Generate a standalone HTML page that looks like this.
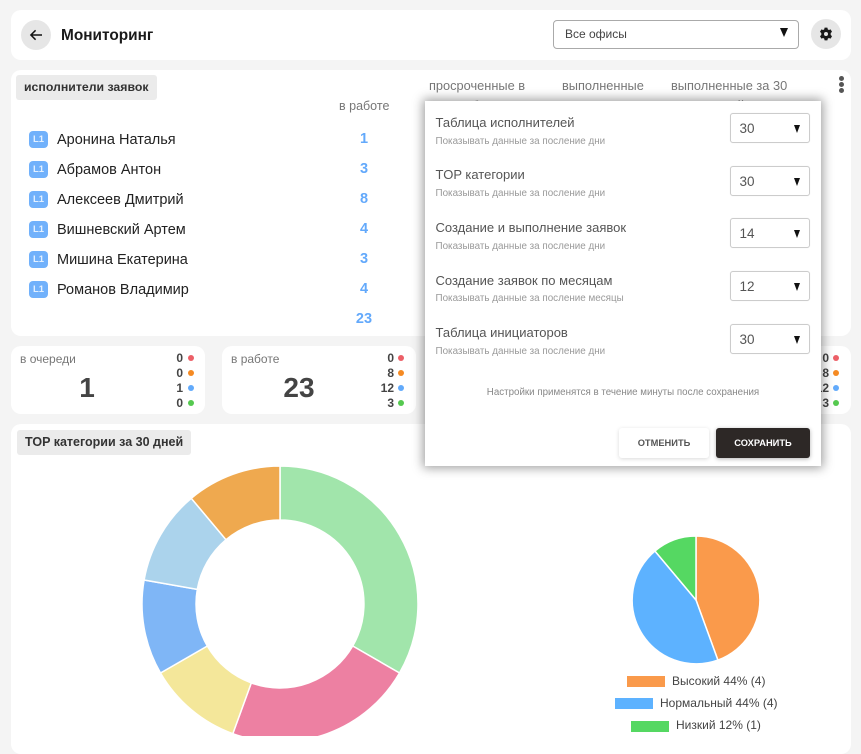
<!DOCTYPE html>
<html lang="ru"><head><meta charset="utf-8"><title>Мониторинг</title>
<style>
html,body{margin:0;padding:0}
body{width:861px;height:736px;position:relative;overflow:hidden;background:#f4f4f4;font-family:"Liberation Sans",sans-serif;color:#222}
.c{position:absolute;background:#fff;border-radius:10px}
.t{position:absolute;white-space:nowrap;line-height:20px;height:20px}
.lab{position:absolute;background:#ebebeb;border-radius:3px;font-weight:bold;font-size:12.3px;line-height:25px;height:25px;color:#333;box-sizing:border-box}
.h{font-size:12.5px;color:#777}
.hh{font-size:12.8px;color:#777}
.b{position:absolute;left:29px;width:19px;height:17px;background:#71b1fb;border-radius:4px;color:#e3f0ff;font-size:9.5px;font-weight:bold;line-height:17px;text-align:center}
.n{left:57px;font-size:14.5px;color:#222}
.v{left:334px;width:60px;text-align:center;font-size:14.5px;font-weight:bold;color:#63a9fb}
.s{font-size:12px;font-weight:bold;color:#444;text-align:right;width:24px}
.d{position:absolute;width:6px;height:6px;border-radius:50%}
.k{position:absolute;left:839px;width:5px;height:5px;border-radius:50%;background:#555}
.r{background:#ec5f67}.o{background:#f58a22}.u{background:#62aafb}.g{background:#55c94f}
.bg{font-size:28px;font-weight:bold;color:#444;text-align:center;line-height:30px;height:30px}
.m{position:absolute;left:425px;top:101px;width:396px;height:365px;background:#fff;box-shadow:0 0 10px 2px rgba(0,0,0,.38)}
.mt{left:10.5px;font-size:13px;color:#555}
.ms{left:10.5px;font-size:9.85px;color:#999}
.sel{position:absolute;left:305px;width:80px;height:30px;box-sizing:border-box;border:1px solid #ccc;border-radius:3px;background:#fff;box-shadow:0 0 1px rgba(0,0,0,.1);font-size:13.5px;line-height:29px;color:#555;padding-left:8.5px}
.sel i{position:absolute;left:63px;top:11px;width:0;height:0;border-left:3.5px solid transparent;border-right:3.5px solid transparent;border-top:8px solid #111}
.btn{position:absolute;top:327px;height:30px;line-height:31px;text-align:center;font-size:9.3px;font-weight:bold;border-radius:3px}
.lg{position:absolute;height:12px;width:38px}
.lt{font-size:12px;color:#444}
</style></head><body>

<div class="c" style="left:11px;top:10px;width:840px;height:50px"></div>
<div style="position:absolute;left:21px;top:20px;width:30px;height:30px;border-radius:50%;background:#e6e6e6"></div>
<svg style="position:absolute;left:28px;top:27px" width="16" height="16" viewBox="0 0 16 16"><path d="M14 8H3.2M7.6 3.3L2.9 8l4.7 4.7" fill="none" stroke="#111" stroke-width="1.5"/></svg>
<div class="t" style="left:61px;top:26px;font-size:15.4px;font-weight:bold;color:#1a1a1a">Мониторинг</div>
<div style="position:absolute;left:553px;top:20px;width:246px;height:29px;box-sizing:border-box;border:1px solid #aaa;border-radius:4px;background:#fff"></div>
<div class="t" style="left:565px;top:24px;font-size:12px;color:#444">Все офисы</div>
<div style="position:absolute;left:780px;top:28px;width:0;height:0;border-left:4.5px solid transparent;border-right:4.5px solid transparent;border-top:9px solid #111"></div>
<div style="position:absolute;left:811px;top:19px;width:30px;height:30px;border-radius:50%;background:#e6e6e6"></div>
<svg style="position:absolute;left:819px;top:27px" width="14" height="14" viewBox="0 0 14 14"><path fill-rule="evenodd" fill="#1a1a1a" d="M5.6.6h2.8l.4 1.8 1.1.6 1.7-.6 1.4 2.4-1.3 1.3v1.8l1.3 1.3-1.4 2.4-1.7-.6-1.1.6-.4 1.8H5.6l-.4-1.8-1.1-.6-1.7.6L1 9.2l1.3-1.3V6.1L1 4.8l1.4-2.4 1.7.6 1.1-.6zM7 5a2 2 0 1 0 0 4 2 2 0 0 0 0-4z"/></svg>

<div class="c" style="left:11px;top:70px;width:840px;height:266px"></div>
<div class="lab" style="left:16px;top:75px;width:141px;padding-left:8px">исполнители заявок</div>
<div class="t h" style="left:339px;top:96px">в работе</div>
<div class="t hh" style="left:429px;top:75.5px">просроченные в</div>
<div class="t hh" style="left:562px;top:75.5px">выполненные</div>
<div class="t hh" style="left:671px;top:75.5px">выполненные за 30</div>
<div class="t hh" style="left:440px;width:76px;text-align:center;top:96px">работе</div>
<div class="t hh" style="left:700px;width:60px;text-align:center;top:96px">дней</div>
<div class="k" style="top:76px"></div>
<div class="k" style="top:82px"></div>
<div class="k" style="top:88px"></div>

<div class="b" style="top:131px">L1</div><div class="t n" style="top:130px">Аронина Наталья</div><div class="t v" style="top:129px">1</div>
<div class="b" style="top:161px">L1</div><div class="t n" style="top:160px">Абрамов Антон</div><div class="t v" style="top:159px">3</div>
<div class="b" style="top:191px">L1</div><div class="t n" style="top:190px">Алексеев Дмитрий</div><div class="t v" style="top:189px">8</div>
<div class="b" style="top:221px">L1</div><div class="t n" style="top:220px">Вишневский Артем</div><div class="t v" style="top:219px">4</div>
<div class="b" style="top:251px">L1</div><div class="t n" style="top:250px">Мишина Екатерина</div><div class="t v" style="top:249px">3</div>
<div class="b" style="top:281px">L1</div><div class="t n" style="top:280px">Романов Владимир</div><div class="t v" style="top:279px">4</div>
<div class="t v" style="top:309px">23</div>

<div class="c" style="left:11px;top:346px;width:194px;height:68px"></div>
<div class="t h" style="left:20px;top:349px;font-size:12px">в очереди</div>
<div class="t bg" style="left:57px;top:373px;width:60px">1</div>
<div class="t s" style="left:159px;top:348px">0</div><div class="d r" style="left:188px;top:355px"></div>
<div class="t s" style="left:159px;top:363px">0</div><div class="d o" style="left:188px;top:370px"></div>
<div class="t s" style="left:159px;top:378px">1</div><div class="d u" style="left:188px;top:385px"></div>
<div class="t s" style="left:159px;top:393px">0</div><div class="d g" style="left:188px;top:400px"></div>

<div class="c" style="left:222px;top:346px;width:194px;height:68px"></div>
<div class="t h" style="left:231px;top:349px;font-size:12px">в работе</div>
<div class="t bg" style="left:269px;top:373px;width:60px">23</div>
<div class="t s" style="left:370px;top:348px">0</div><div class="d r" style="left:398px;top:355px"></div>
<div class="t s" style="left:370px;top:363px">8</div><div class="d o" style="left:398px;top:370px"></div>
<div class="t s" style="left:370px;top:378px">12</div><div class="d u" style="left:398px;top:385px"></div>
<div class="t s" style="left:370px;top:393px">3</div><div class="d g" style="left:398px;top:400px"></div>

<div class="c" style="left:640px;top:346px;width:211px;height:68px"></div>
<div class="t s" style="left:805px;top:348px">0</div><div class="d r" style="left:833px;top:355px"></div>
<div class="t s" style="left:805px;top:363px">8</div><div class="d o" style="left:833px;top:370px"></div>
<div class="t s" style="left:805px;top:378px">12</div><div class="d u" style="left:833px;top:385px"></div>
<div class="t s" style="left:805px;top:393px">3</div><div class="d g" style="left:833px;top:400px"></div>

<div class="c" style="left:11px;top:424px;width:840px;height:330px"></div>
<div class="lab" style="left:17px;top:430px;width:174px;padding-left:8px;font-size:12.5px">TOP категории за 30 дней</div>

<svg style="position:absolute;left:0;top:0" width="861" height="736" viewBox="0 0 861 736">
<g stroke="#fff" stroke-width="1.5">
<path fill="#a1e5ab" d="M280 466A138 138 0 0 1 399.5 673L352.7 646A84 84 0 0 0 280 520Z"/>
<path fill="#ed80a2" d="M399.5 673A138 138 0 0 1 232.8 733.7L251.3 682.9A84 84 0 0 0 352.7 646Z"/>
<path fill="#f4e79a" d="M232.8 733.7A138 138 0 0 1 160.5 673L207.3 646A84 84 0 0 0 251.3 682.9Z"/>
<path fill="#7fb6f6" d="M160.5 673A138 138 0 0 1 144.1 580L197.3 589.4A84 84 0 0 0 207.3 646Z"/>
<path fill="#abd3ec" d="M144.1 580A138 138 0 0 1 191.3 498.3L226 539.7A84 84 0 0 0 197.3 589.4Z"/>
<path fill="#efa94f" d="M191.3 498.3A138 138 0 0 1 280 466V520A84 84 0 0 0 226 539.7Z"/>
<path fill="#fa9a4b" d="M696 600V536A64 64 0 0 1 717.9 660.1Z"/>
<path fill="#5db2ff" d="M696 600L717.9 660.1A64 64 0 0 1 654.9 551Z"/>
<path fill="#55d862" d="M696 600L654.9 551A64 64 0 0 1 696 536Z"/>
</g></svg>

<div class="lg" style="left:627px;top:676px;height:11px;background:#fa9a4b"></div>
<div class="t lt" style="left:672px;top:671px">Высокий 44% (4)</div>
<div class="lg" style="left:615px;top:698px;height:11px;background:#5db2ff"></div>
<div class="t lt" style="left:660px;top:693px">Нормальный 44% (4)</div>
<div class="lg" style="left:631px;top:721px;height:11px;background:#55d862"></div>
<div class="t lt" style="left:676px;top:715px">Низкий 12% (1)</div>

<div class="m">
<div class="t mt" style="top:12px">Таблица исполнителей</div><div class="t ms" style="top:31px">Показывать данные за посление дни</div>
<div class="sel" style="top:12px">30<i></i></div>
<div class="t mt" style="top:64px">TOP категории</div><div class="t ms" style="top:83px">Показывать данные за посление дни</div>
<div class="sel" style="top:65px">30<i></i></div>
<div class="t mt" style="top:117px">Создание и выполнение заявок</div><div class="t ms" style="top:136px">Показывать данные за посление дни</div>
<div class="sel" style="top:117px">14<i></i></div>
<div class="t mt" style="top:170px">Создание заявок по месяцам</div><div class="t ms" style="top:188px">Показывать данные за посление месяцы</div>
<div class="sel" style="top:170px">12<i></i></div>
<div class="t mt" style="top:222px">Таблица инициаторов</div><div class="t ms" style="top:241px">Показывать данные за посление дни</div>
<div class="sel" style="top:223px">30<i></i></div>
<div class="t" style="left:0;width:396px;text-align:center;top:282px;font-size:9.75px;color:#888">Настройки применятся в течение минуты после сохранения</div>
<div class="btn" style="left:194px;width:90px;background:#fff;color:#555;box-shadow:0 1px 4px rgba(0,0,0,.15)">ОТМЕНИТЬ</div>
<div class="btn" style="left:291px;width:94px;background:#2d2826;color:#fff;box-shadow:0 1px 4px rgba(0,0,0,.3)">СОХРАНИТЬ</div>
</div>
</body></html>
